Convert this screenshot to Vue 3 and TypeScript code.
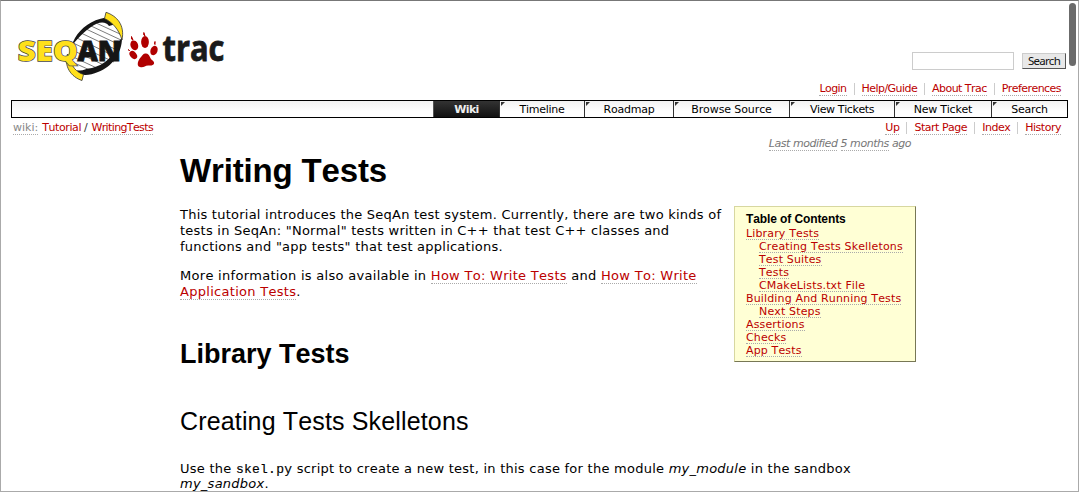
<script setup lang="ts">
interface Tab { label: string; cls: string }
interface TocItem { label: string; sub?: boolean }

const metaLinks: string[] = ['Login', 'Help/Guide', 'About Trac', 'Preferences']
const contextLinks: string[] = ['Up', 'Start Page', 'Index', 'History']
const tabs: Tab[] = [
  { label: 'Wiki', cls: 'wiki' },
  { label: 'Timeline', cls: 'timeline' },
  { label: 'Roadmap', cls: 'roadmap' },
  { label: 'Browse Source', cls: 'browse' },
  { label: 'View Tickets', cls: 'view' },
  { label: 'New Ticket', cls: 'new' },
  { label: 'Search', cls: 'find' },
]
const toc: TocItem[] = [
  { label: 'Library Tests' },
  { label: 'Creating Tests Skelletons', sub: true },
  { label: 'Test Suites', sub: true },
  { label: 'Tests', sub: true },
  { label: 'CMakeLists.txt File', sub: true },
  { label: 'Building And Running Tests' },
  { label: 'Next Steps', sub: true },
  { label: 'Assertions' },
  { label: 'Checks' },
  { label: 'App Tests' },
]
</script>

<template>
  <div class="window">
    <header class="banner">
      <svg class="logo" width="212" height="76" viewBox="15 8 212 76" role="img" aria-label="SeqAn trac">
        <g fill="none" stroke="#444" stroke-width="0.7">
          <path d="M96 23 L120 34M90 25.500 L121 40M85 28.500 L120 45M81 33 L119 51M77 38 L118 58M73 43 L114 62M70 49 L106 66M69 55 L100 69.500M70 61 L92 71" />
        </g>
        <path d="M106 17.500 C91 20 81 28 75 38 L70 48 L72 46 C79 36 88 28 97 23.500 C103 21.500 107 23 109 26 L116 24Z" fill="#151515" />
        <path d="M122 38 C122 53 112 67 98 72 C91 75 85 76 79 74 L77 70 C82 72 86 68 92 68 C104 65 115 56 118 42Z" fill="#151515" />
        <path d="M106 12.300 C117 16 125 25 122 40 C119 30 113 22.500 104.500 18.500Z" fill="#ffe01b" stroke="#333" stroke-width="0.8" />
        <path d="M67.500 54 C63.500 66 71 77 82 80.500 L83.500 74.500 C76 72 71 66 70.500 58Z" fill="#ffe01b" stroke="#333" stroke-width="0.8" />
        <text class="mark seq" x="17.800" y="61.300" textLength="60" lengthAdjust="spacingAndGlyphs">SEQ</text>
        <text class="mark an" x="77.500" y="61.300" textLength="43.500" lengthAdjust="spacingAndGlyphs">AN</text>
        <g fill="#b00000">
          <ellipse cx="134.300" cy="45.300" rx="3.800" ry="5" transform="rotate(-20 134.300 45.300)" />
          <path d="M131.500 36.500 L133 40 L131.500 39Z" stroke="#b00000" />
          <ellipse cx="145" cy="42" rx="3.900" ry="6" />
          <path d="M143.800 32.500 L145 36 L143.800 35Z" stroke="#b00000" />
          <ellipse cx="154" cy="50.500" rx="3.500" ry="4.900" transform="rotate(20 154 50.500)" />
          <path d="M155 41.500 L155 44.500 L154.500 44Z" stroke="#b00000" />
          <ellipse cx="133.300" cy="55" rx="3.200" ry="4.500" transform="rotate(-40 133.300 55)" />
          <path d="M128.500 49.500 L129.500 51Z" stroke="#b00000" />
          <path d="M146 53.500 C150 54 149.500 58 152 60 C156 63 154 66 149 65.500 C145 65 144 68 140 67 C136 66 138 60 141 57 C143 55 143 53.500 146 53.500Z" />
        </g>
        <text class="trac" x="162.500" y="61.300" textLength="62" lengthAdjust="spacingAndGlyphs">trac</text>
      </svg>
      <div class="tools">
        <form class="search" @submit.prevent>
          <input type="text" aria-label="Search terms">
          <button type="submit">Search</button>
        </form>
        <ul class="links meta">
          <li v-for="l in metaLinks" :key="l"><a>{{ l }}</a></li>
        </ul>
      </div>
    </header>

    <nav class="tabs">
      <a v-for="t in tabs" :key="t.label" class="tab" :class="t.cls"><span>{{ t.label }}</span></a>
    </nav>

    <div class="context">
      <div class="path"><a class="first">wiki:</a><a>Tutorial</a><i>/</i><a class="current">WritingTests</a></div>
      <ul class="links ctx">
        <li v-for="l in contextLinks" :key="l"><a>{{ l }}</a></li>
      </ul>
    </div>

    <main class="page">
      <div class="modified"><span>Last modified</span> <span>5 months</span> ago</div>
      <h1>Writing Tests</h1>
      <div class="intro">
        <div class="copy">
          <p>This tutorial introduces the SeqAn test system. Currently, there are two kinds of<br>tests in SeqAn: "Normal" tests written in C++ that test C++ classes and<br>functions and "app tests" that test applications.</p>
          <p class="more">More information is also available in <a>How To: Write Tests</a> and <a>How To: Write</a><br><a>Application Tests</a>.</p>
          <h2>Library Tests</h2>
        </div>
        <aside class="toc">
          <h4>Table of Contents</h4>
          <ul>
            <li v-for="t in toc" :key="t.label" :class="{ sub: t.sub }"><a>{{ t.label }}</a></li>
          </ul>
        </aside>
      </div>
      <h3>Creating Tests Skelletons</h3>
      <p class="usage">Use the <code>skel.py</code> script to create a new test, in this case for the module <em>my_module</em> in the sandbox<br><em>my_sandbox</em>.</p>
    </main>
    <div class="thumb"></div>
  </div>
</template>

<style>
body { margin: 0; background: #fff; overflow: hidden; }
</style>

<style scoped>
* { box-sizing: border-box; }
.window {
  position: relative; width: 1079px; height: 492px; overflow: hidden; background: #fff;
  border: 1px solid #aaa; border-top-color: #777;
  font: 13px/16px Verdana, "DejaVu Sans", sans-serif; color: #000; white-space: nowrap;
  font-kerning: none;
}
a { color: #b00; border-bottom: 1px dotted #aaa; }
ul { list-style: none; margin: 0; padding: 0; }
.banner { height: 99px; display: flex; justify-content: space-between; padding: 7px 10px 0 14px; }
.logo { flex: none; overflow: visible; }
.mark { font: 800 29px "Open Sans", sans-serif; }
.seq { fill: #ffe01b; stroke: #444; stroke-width: 1.4px; paint-order: stroke; }
.an { fill: #151515; stroke: #151515; stroke-width: .9px; }
.trac { font: 700 35px "Open Sans", sans-serif; fill: #1a1a1a; stroke: #1a1a1a; stroke-width: .8px; }
.tools { display: flex; flex-direction: column; align-items: flex-end; padding-top: 44px; }
.search { display: flex; gap: 8px; align-items: center; margin: 0 2px 0 0; }
.search input { width: 102px; height: 18px; border: 1px solid #ccc; padding: 0; margin: 0; background: #fff; }
.search button {
  width: 44px; height: 16px; margin: 0; padding: 0; border: 1px solid #ccc; border-right-color: #555; border-bottom-color: #555;
  background: #e8e8e8; font: 11.5px/12px "Noto Sans", sans-serif; color: #111; letter-spacing: -.7px;
}
.links { display: flex; font-size: 11px; line-height: 12px; letter-spacing: -.48px; }
.links li { padding: 0 7px; border-left: 1px solid #ccc; height: 12px; }
.links li:first-child { border-left: 0; }
.links a { display: block; height: 13px; }
.meta { margin-top: 13px; letter-spacing: -.55px; }
.tabs { display: flex; justify-content: flex-end; width: 1057px; height: 18px; margin-left: 10px; border: 1px solid #000; background: linear-gradient(#f2f2f2, #fff 65%); }
.tab { position: relative; border: 0; border-left: 1px solid #333; color: #000; font-size: 11px; line-height: 17px; text-align: center; letter-spacing: -.25px; }
.tab::before { content: ""; position: absolute; left: 1px; top: 1px; width: 4px; height: 4px; background: #333; clip-path: polygon(0 0, 100% 0, 0 100%); }
.wiki { width: 66px; background: linear-gradient(#333, #111); color: #eee; font-weight: 700; border-left-color: #555; letter-spacing: -.6px; }
.wiki::before { display: none; }
.timeline { width: 85px; }
.roadmap { width: 89px; }
.browse { width: 116px; letter-spacing: -.55px; }
.browse { letter-spacing: -.1px; }
.view { width: 105px; letter-spacing: -.4px; }
.new { width: 97px; }
.find { width: 76px; }
.context { display: flex; justify-content: space-between; padding: 4px 10px 0 12px; height: 20px; }
.path { display: flex; font-size: 11px; line-height: 12px; letter-spacing: -.4px; }
.path a { height: 13px; }
.path .first { color: #888; margin-right: 4px; letter-spacing: 0; }
.path .current { letter-spacing: -.62px; }
.path i { font-style: normal; margin: 0 4px 0 3px; color: #333; }
.page { width: 736px; margin-left: 179px; }
.page p { margin: 0 0 13px; letter-spacing: .235px; }
.page .more { letter-spacing: .29px; }
.page .usage { line-height: 15px; letter-spacing: .25px; }
.modified { text-align: right; font-size: 11px; line-height: 12px; font-style: italic; color: #777; padding-right: 5px; letter-spacing: -.45px; }
.modified span { display: inline-block; height: 13px; border-bottom: 1px dotted #aaa; }
h1, h2, h3, h4 { font-family: Arial, "Liberation Sans", sans-serif; margin: 0; }
h1 { font-size: 33px; line-height: 38px; letter-spacing: -.15px; padding-top: 1px; margin-bottom: 16px; }
.intro { display: flex; justify-content: space-between; align-items: flex-start; height: 190px; }
.copy { padding-top: 1px; }
h2 { font-size: 27px; line-height: 32px; margin-top: 38px; }
h3 { font-size: 25px; line-height: 30px; font-weight: 400; letter-spacing: .15px; margin: 10px 0 25px; }
code { font: 13px/1 "Courier New", "Liberation Mono", monospace; -webkit-text-stroke: .15px #000; }
.toc { width: 182px; height: 156px; padding: 6px 0 0 11px; border: 1px solid #d7d7a0; border-right-color: #777755; border-bottom-color: #777755; background: #ffffd5; }
.toc h4 { font-size: 12px; line-height: 13px; margin-bottom: 1px; letter-spacing: -.1px; }
.toc li { font-size: 11px; line-height: 13px; height: 13px; letter-spacing: .15px; }
.toc a { display: inline-block; height: 13px; }
.toc .sub { padding-left: 13px; }
.thumb { position: absolute; right: 2px; top: 2px; width: 7px; height: 63px; border-radius: 4px; background: #6b6b6b; }
</style>
